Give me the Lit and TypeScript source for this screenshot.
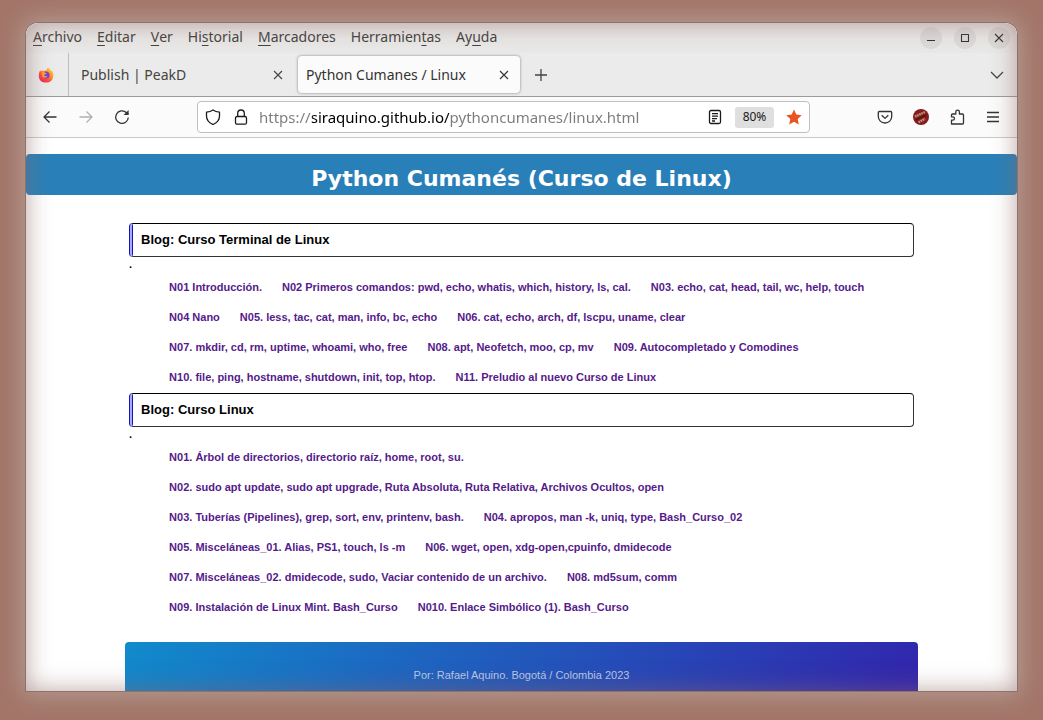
import { LitElement, html, css, svg, nothing } from "lit";
import { customElement, state } from "lit/decorators.js";

interface Section {
  title: string;
  notes: string[];
}

const MENUS: [string, string, string][] = [
  ["", "A", "rchivo"],
  ["", "E", "ditar"],
  ["", "V", "er"],
  ["Hi", "s", "torial"],
  ["", "M", "arcadores"],
  ["Herramien", "t", "as"],
  ["Ay", "u", "da"],
];

const SECTIONS: Section[] = [
  {
    title: "Blog: Curso Terminal de Linux",
    notes: [
      "N01 Introducción.",
      "N02 Primeros comandos: pwd, echo, whatis, which, history, ls, cal.",
      "N03. echo, cat, head, tail, wc, help, touch",
      "N04 Nano",
      "N05. less, tac, cat, man, info, bc, echo",
      "N06. cat, echo, arch, df, lscpu, uname, clear",
      "N07. mkdir, cd, rm, uptime, whoami, who, free",
      "N08. apt, Neofetch, moo, cp, mv",
      "N09. Autocompletado y Comodines",
      "N10. file, ping, hostname, shutdown, init, top, htop.",
      "N11. Preludio al nuevo Curso de Linux",
    ],
  },
  {
    title: "Blog: Curso Linux",
    notes: [
      "N01. Árbol de directorios, directorio raíz, home, root, su.",
      "N02. sudo apt update, sudo apt upgrade, Ruta Absoluta, Ruta Relativa, Archivos Ocultos, open",
      "N03. Tuberías (Pipelines), grep, sort, env, printenv, bash.",
      "N04. apropos, man -k, uniq, type, Bash_Curso_02",
      "N05. Misceláneas_01. Alias, PS1, touch, ls -m",
      "N06. wget, open, xdg-open,cpuinfo, dmidecode",
      "N07. Misceláneas_02. dmidecode, sudo, Vaciar contenido de un archivo.",
      "N08. md5sum, comm",
      "N09. Instalación de Linux Mint. Bash_Curso",
      "N010. Enlace Simbólico (1). Bash_Curso",
    ],
  },
];

const shapes = {
  back: svg`<path d="M14.5 8H2M7.5 2.5L2 8l5.500 5.500"/>`,
  forward: svg`<path d="M1.500 8H14M8.500 2.500L14 8l-5.500 5.500"/>`,
  reload: svg`<path d="M14.300 8.500a6.300 6.300 0 1 1-2-5l2 2"/><path class="solid" d="M14.600 1v5h-5z"/>`,
  shield: svg`<path d="M8 1C6 2.500 4 3 1.500 3.200V7c0 4 3 7 6.500 8.500C11.500 14 14.500 11 14.500 7V3.200C12 3 10 2.500 8 1z"/>`,
  lock: svg`<rect x="2.500" y="7.500" width="11" height="7.700" rx="1.500"/><path d="M4.700 7.500V4.300a3.300 3.300 0 0 1 6.600 0v3.200"/>`,
  reader: svg`<rect x="2.500" y="1.500" width="11" height="13" rx="1.500"/><path d="M5 4.700h6M5 7.200h6M5 9.700h5M5 12h3"/>`,
  star: svg`<path class="solid" d="M8 .6l2.300 4.900 5.400.7-4 3.700 1.100 5.500L8 12.700l-4.800 2.700 1.100-5.500-4-3.700 5.400-.7z"/>`,
  pocket: svg`<path d="M2.300 2.500h11.400a1 1 0 0 1 1 1V7.500a6.700 6.500 0 0 1-13.400 0V3.500a1 1 0 0 1 1-1z"/><path d="M4.700 6.200L8 9.400l3.300-3.200"/>`,
  puzzle: svg`<path d="M2.500 15v-3.800h1.300a1.700 1.700 0 0 0 0-3.400H2.500V6a1 1 0 0 1 1-1H6.800V3a1.800 1.800 0 0 1 3.600 0V5h3.100a1 1 0 0 1 1 1v8a1 1 0 0 1-1 1z"/>`,
  menu: svg`<path d="M2 3.500h12M2 8h12M2 12.500h12"/>`,
  close: svg`<path d="M4 4l8 8M12 4l-8 8"/>`,
  plus: svg`<path d="M8 2v12M2 8h12"/>`,
  chevron: svg`<path d="M2 5l6 6 6-6"/>`,
  minimize: svg`<path d="M4 10.500h8"/>`,
  maximize: svg`<rect x="4.500" y="4.500" width="7" height="7"/>`,
};

const icon = (name: keyof typeof shapes) =>
  html`<svg class="icon" viewBox="0 0 16 16" aria-hidden="true">${shapes[name]}</svg>`;

const firefox = html`<svg class="icon" viewBox="0 0 16 16" aria-hidden="true">
  <defs>
    <linearGradient id="flame" x1="1" y1="0" x2="0.200" y2="1">
      <stop offset="0" stop-color="#ffe14a" />
      <stop offset="0.400" stop-color="#ff9a26" />
      <stop offset="0.700" stop-color="#ff4b3d" />
      <stop offset="1" stop-color="#ec2467" />
    </linearGradient>
  </defs>
  <path fill="url(#flame)" d="M2.200 3.300L3 4.500 4.600 3.200 5 4.300 8.700 3 9.500.5c2 1 3 2.500 3.500 3.500l.8-.4C16.500 7 16 15.600 8 15.600S-.4 8 2.200 3.300z" />
  <circle cx="8" cy="8" r="3.600" fill="#7540d8" />
  <path fill="#ffa226" d="M3.600 5.500C5 4.600 7 5 8.800 6.500 8 7.300 6.500 7 6 8c.5 1.500 2.500 1.500 3.500.8C9 11 5.500 11.500 4.300 9.500z" />
</svg>`;

const avatar = html`<svg class="icon" viewBox="0 0 16 16" aria-hidden="true">
  <circle cx="8" cy="8" r="8" fill="#861b1c" />
  <path d="M3 11l10-5" stroke="#501011" />
  <path d="M2 7.500l10-4.500M5.500 13.300l6.500-3.500" stroke="#b99479" stroke-width="2.400" stroke-dasharray="1.700 .6" />
</svg>`;

@customElement("course-section")
class CourseSection extends LitElement {
  static properties = { section: { attribute: false } };
  declare section: Section;

  static styles = css`
    :host {
      display: block;
      font: bold 11px/15px "Liberation Sans", Arial, sans-serif;
    }
    .title {
      margin: 0;
      padding: 0 8px;
      border: 1px solid #333;
      border-top-color: #000;
      border-left: 4px double #1414b4;
      border-radius: 4px;
      background: linear-gradient(90deg, #a9a9ff 4px, #fff 4px) border-box;
      color: #000;
      font-size: 13px;
      line-height: 32px;
    }
    .dot {
      margin: 0;
      color: #000;
    }
    .notes {
      display: flex;
      flex-wrap: wrap;
      column-gap: 20px;
      margin: 0;
      padding: 0 0 0 40px;
      list-style: none;
      line-height: 30px;
    }
    .link {
      color: #551a8b;
      text-decoration: none;
    }
  `;

  render() {
    if (!this.section) return nothing;
    return html`
      <h2 class="title">${this.section.title}</h2>
      <p class="dot">.</p>
      <ul class="notes">
        ${this.section.notes.map((n) => html`<li><a class="link" href="#">${n}</a></li>`)}
      </ul>
    `;
  }
}

@customElement("app-root")
class AppRoot extends LitElement {
  @state() private url = "https://siraquino.github.io/pythoncumanes/linux.html";

  static styles = css`
    :host {
      display: block;
      box-sizing: border-box;
      height: 100vh;
      padding: 23px 26px 29px;
      background: #a37569;
      overflow: hidden;
      font: 14px/20px "Noto Sans", "Open Sans", sans-serif;
      color: #45433f;
    }
    .window {
      position: relative;
      display: flex;
      flex-direction: column;
      height: 100%;
      overflow: hidden;
      border-radius: 12px 12px 0 0;
      background: #fff;
      box-shadow: 0 0 0 1px #927069, 0 0 24px 3px #b5a096;
    }
    .window::after {
      content: "";
      position: absolute;
      inset: 0;
      border-radius: inherit;
      box-shadow: inset 0 0 24px rgba(140, 104, 98, 0.62);
      pointer-events: none;
    }
    button {
      display: inline-flex;
      align-items: center;
      justify-content: center;
      flex: none;
      padding: 0;
      border: 0;
      background: none;
      color: inherit;
      font: inherit;
    }
    .icon {
      display: block;
      width: 16px;
      height: 16px;
      fill: none;
      stroke: currentColor;
      stroke-width: 1.300;
      stroke-linejoin: round;
    }
    .icon .solid {
      fill: currentColor;
      stroke: none;
    }
    .brand .icon,
    .avatar .icon {
      stroke: none;
    }
    .menubar {
      display: flex;
      align-items: center;
      flex: none;
      height: 30px;
      padding: 0 7px;
      background: #e9e8e7;
    }
    .menus {
      display: flex;
      flex: 1;
      gap: 15px;
    }
    .menus button {
      padding-bottom: 2px;
    }
    .key {
      text-decoration: underline;
      text-underline-offset: 3px;
    }
    .controls {
      display: flex;
      gap: 12px;
    }
    .control {
      width: 22px;
      height: 22px;
      border-radius: 50%;
      background: #dcdad9;
      color: #333;
    }
    .control .icon {
      stroke-width: 1.100;
    }
    .tabs {
      display: flex;
      align-items: center;
      flex: none;
      height: 43px;
      border-bottom: 1px solid #9b9b9b;
      background: #ebebeb;
    }
    .brand {
      align-self: stretch;
      box-sizing: border-box;
      width: 43px;
      padding-right: 2px;
      border-right: 1px solid #bdbdbd;
    }
    .tab {
      display: flex;
      align-items: center;
      box-sizing: border-box;
      width: 222px;
      height: 37px;
      padding: 0 8px;
      border-radius: 4px;
    }
    .tab.idle {
      width: 229px;
      padding: 0 12px;
    }
    .tab.active {
      background: #fbfbfb;
      box-shadow: 0 0 3px rgba(0, 0, 0, 0.45);
      color: #333;
    }
    .label {
      flex: 1;
      justify-content: flex-start;
      white-space: nowrap;
    }
    .tabclose .icon {
      stroke-width: 1.100;
    }
    .newtab {
      width: 42px;
      height: 36px;
    }
    .all {
      margin-left: auto;
      width: 41px;
      height: 36px;
    }
    .toolbar {
      display: flex;
      align-items: center;
      flex: none;
      height: 40px;
      padding: 0 16px;
      border-bottom: 1px solid #cacaca;
      background: #fbfbfb;
      color: #333;
    }
    .nav,
    .tools {
      display: flex;
      gap: 20px;
    }
    .nav {
      flex: 155;
    }
    .tools {
      flex: 191;
      justify-content: flex-end;
    }
    .faded {
      color: #b0b0b0;
    }
    .address {
      display: flex;
      align-items: center;
      box-sizing: border-box;
      flex: 0 1 613px;
      height: 32px;
      padding: 0 7px;
      gap: 10px;
      border: 1px solid #bfbfbf;
      border-radius: 4px;
      background: #fff;
      color: #1b1b1b;
    }
    .group {
      display: flex;
      align-items: center;
      flex: none;
      gap: 12px;
    }
    .url {
      flex: 1;
      min-width: 0;
      height: 28px;
      padding: 0;
      border: 0;
      outline: 0;
      font: inherit;
      font-size: 15px;
      color: transparent;
      background: linear-gradient(90deg, #7b7b7b 53px, #000 53px 190px, #7b7b7b 190px);
      -webkit-background-clip: text;
      background-clip: text;
    }
    .zoom {
      width: 39px;
      height: 21px;
      border-radius: 3px;
      background: #dfdfdf;
      font-size: 12px;
    }
    .star {
      color: #e95420;
    }
    .page {
      flex: 1;
      min-height: 0;
      overflow: hidden;
      padding-top: 16px;
    }
    .banner {
      margin: 0 0 28px;
      padding: 8px 0 0;
      border-radius: 4px;
      background: #2980b9;
      color: #fff;
      text-align: center;
      font: bold 22px/33px "DejaVu Sans", Verdana, sans-serif;
    }
    .content {
      width: 80%;
      margin: 0 auto;
    }
    .sections {
      display: flex;
      flex-direction: column;
      gap: 1px;
      padding: 0 4px 20px;
    }
    .footer {
      height: 90px;
      padding-top: 23px;
      box-sizing: border-box;
      border-radius: 4px;
      background: linear-gradient(135deg, #118bcc, #3127ad 92%);
      color: #b9c8e6;
      text-align: center;
      font: 11px/20px "Liberation Sans", Arial, sans-serif;
    }
  `;

  render() {
    return html`
      <div class="window">
        <header class="menubar">
          <nav class="menus">
            ${MENUS.map(
              ([pre, key, post]) =>
                html`<button>${pre}<span class="key">${key}</span>${post}</button>`,
            )}
          </nav>
          <div class="controls">
            <button class="control" aria-label="Minimizar">${icon("minimize")}</button>
            <button class="control" aria-label="Maximizar">${icon("maximize")}</button>
            <button class="control" aria-label="Cerrar">${icon("close")}</button>
          </div>
        </header>
        <div class="tabs">
          <button class="brand" aria-label="Firefox">${firefox}</button>
          <div class="tab idle">
            <button class="label">Publish | PeakD</button>
            <button class="tabclose" aria-label="Cerrar pestaña">${icon("close")}</button>
          </div>
          <div class="tab active">
            <button class="label">Python Cumanes / Linux</button>
            <button class="tabclose" aria-label="Cerrar pestaña">${icon("close")}</button>
          </div>
          <button class="newtab" aria-label="Nueva pestaña">${icon("plus")}</button>
          <button class="all" aria-label="Listar pestañas">${icon("chevron")}</button>
        </div>
        <div class="toolbar">
          <div class="nav">
            <button aria-label="Atrás">${icon("back")}</button>
            <button class="faded" aria-label="Adelante">${icon("forward")}</button>
            <button aria-label="Recargar">${icon("reload")}</button>
          </div>
          <div class="address">
            <div class="group">
              <button aria-label="Protección">${icon("shield")}</button>
              <button aria-label="Conexión segura">${icon("lock")}</button>
            </div>
            <input class="url" aria-label="Dirección" .value=${this.url} />
            <div class="group">
              <button aria-label="Vista de lectura">${icon("reader")}</button>
              <button class="zoom">80%</button>
              <button class="star" aria-label="Editar marcador">${icon("star")}</button>
            </div>
          </div>
          <div class="tools">
            <button aria-label="Guardar en Pocket">${icon("pocket")}</button>
            <button class="avatar" aria-label="Python Web">${avatar}</button>
            <button aria-label="Extensiones">${icon("puzzle")}</button>
            <button aria-label="Menú">${icon("menu")}</button>
          </div>
        </div>
        <main class="page">
          <h1 class="banner">Python Cumanés (Curso de Linux)</h1>
          <div class="content">
            <div class="sections">
              ${SECTIONS.map((s) => html`<course-section .section=${s}></course-section>`)}
            </div>
            <footer class="footer">Por: Rafael Aquino. Bogotá / Colombia 2023</footer>
          </div>
        </main>
      </div>
    `;
  }
}
